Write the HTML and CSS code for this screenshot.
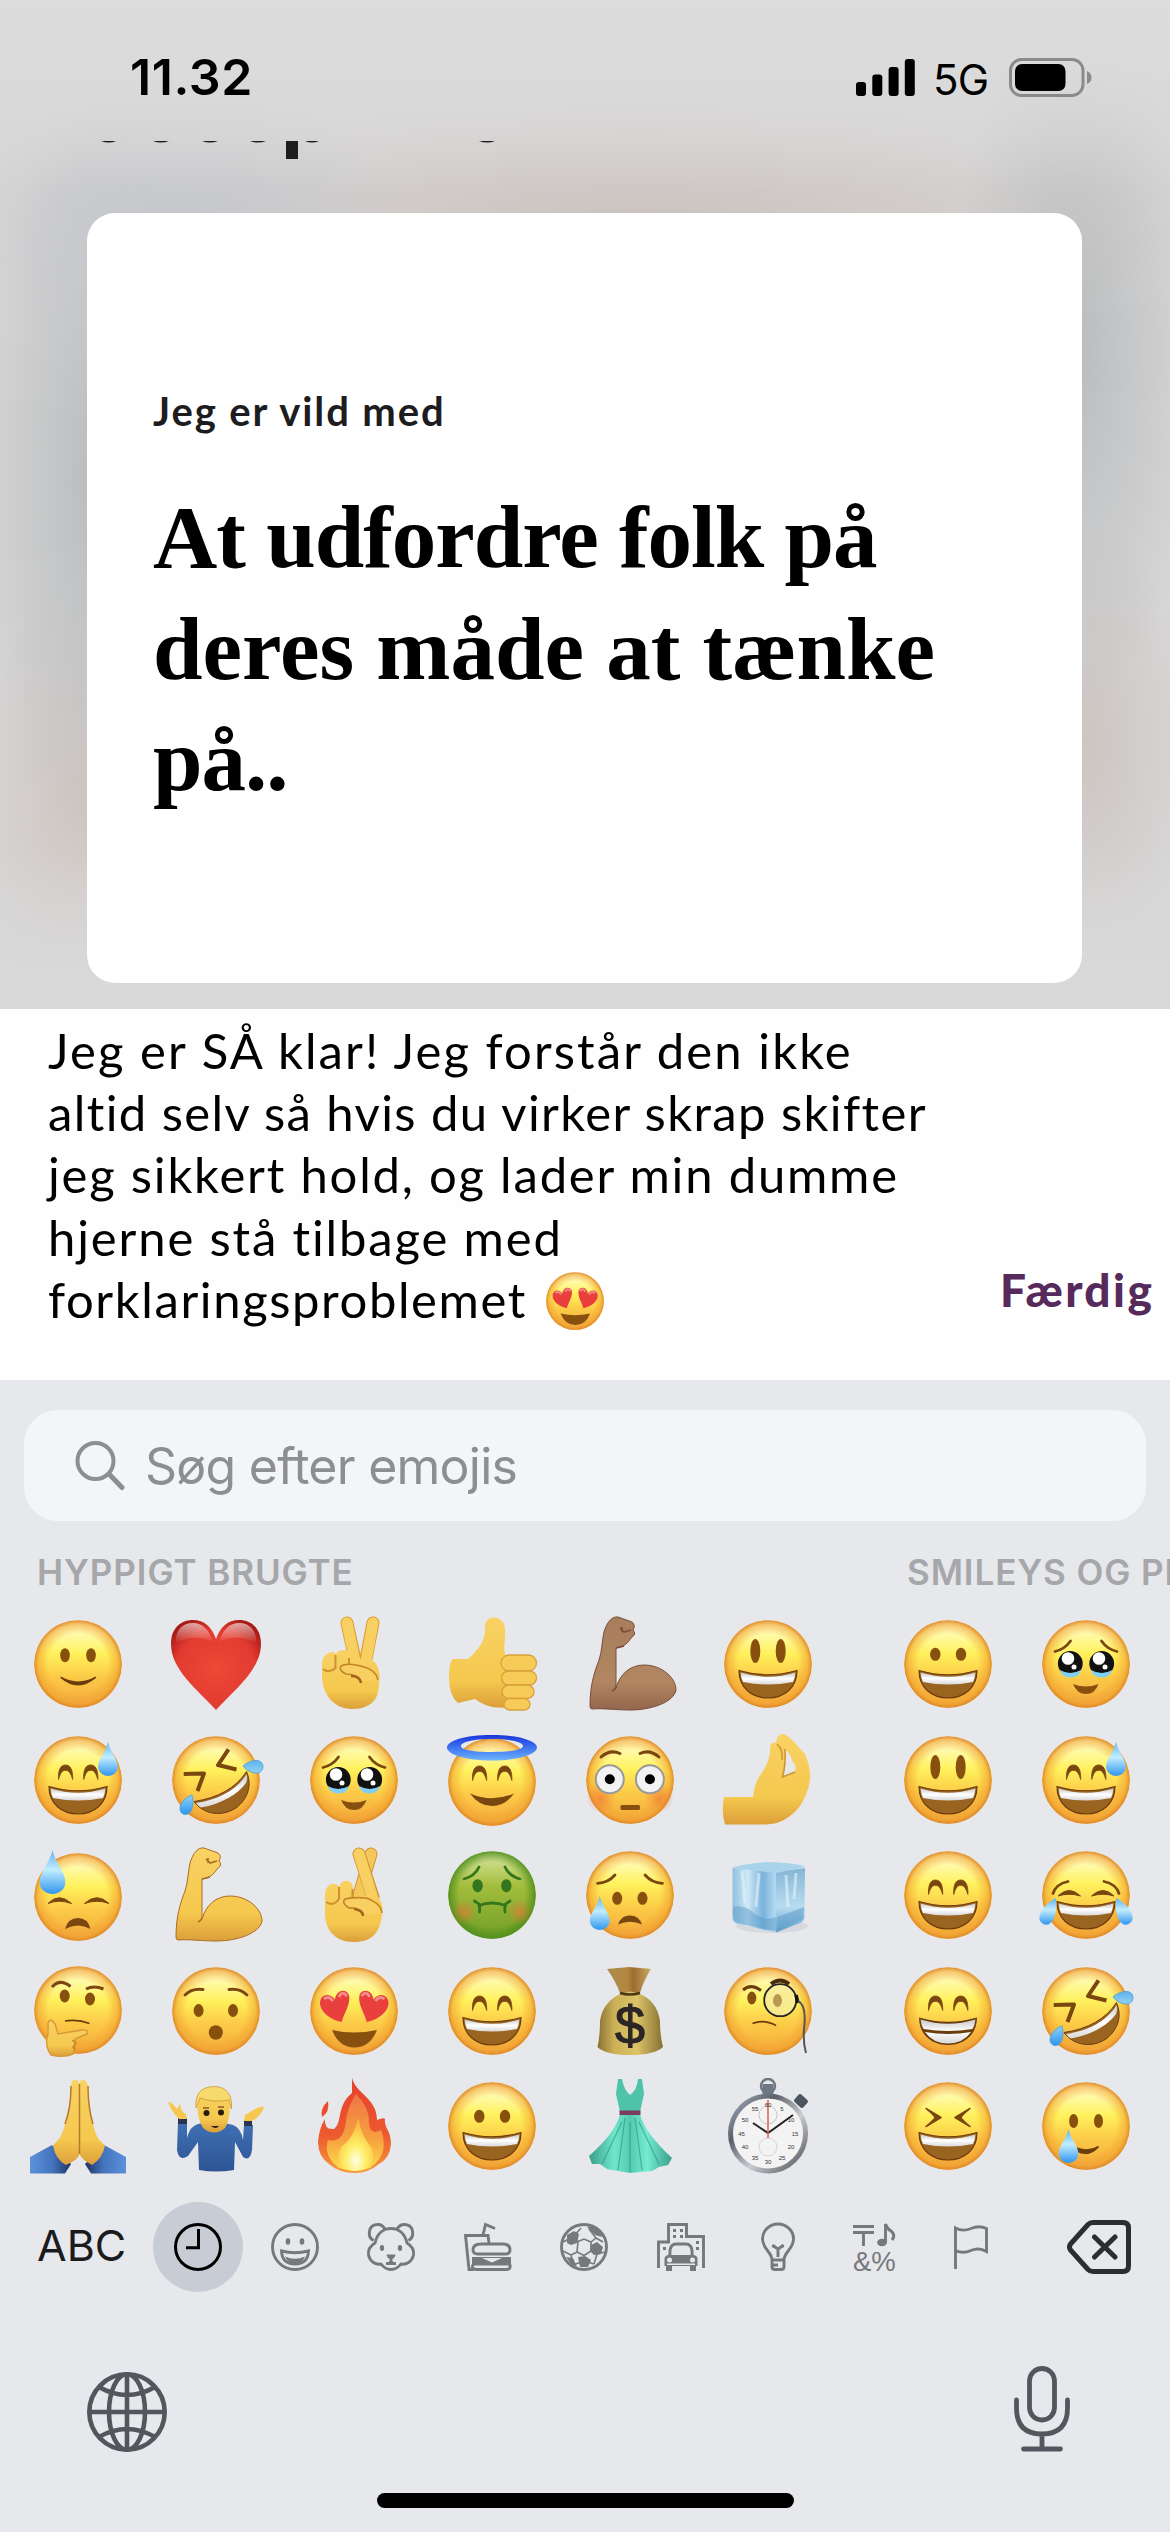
FILE: index.html
```html
<!DOCTYPE html>
<html lang="da">
<head>
<meta charset="utf-8">
<title>Jeg er vild med</title>
<link rel="stylesheet" href="styles.css">
</head>
<body>
<svg class="defs" width="0" height="0" aria-hidden="true">
  <defs>
    <linearGradient id="g-face" x1="0" y1="0" x2="0" y2="1"><stop offset="0" stop-color="#fff6c8"/><stop offset=".14" stop-color="#fffbb0"/><stop offset=".38" stop-color="#fff15c"/><stop offset=".65" stop-color="#fcca47"/><stop offset="1" stop-color="#f3a73c"/></linearGradient>
    <radialGradient id="g-rim"><stop offset=".68" stop-color="#f09a26" stop-opacity="0"/><stop offset=".9" stop-color="#f0a030" stop-opacity=".55"/><stop offset="1" stop-color="#dd8727" stop-opacity=".95"/></radialGradient>
    <linearGradient id="g-green" x1="0" y1="0" x2="0" y2="1"><stop offset="0" stop-color="#dbe7a4"/><stop offset=".4" stop-color="#a3bd3c"/><stop offset="1" stop-color="#6f9f26"/></linearGradient>
    <radialGradient id="g-greenrim"><stop offset=".75" stop-color="#4f8f1c" stop-opacity="0"/><stop offset="1" stop-color="#4f8f1c" stop-opacity=".9"/></radialGradient>
    <radialGradient id="g-blush"><stop offset="0" stop-color="#f07038" stop-opacity=".6"/><stop offset="1" stop-color="#f07038" stop-opacity="0"/></radialGradient>
    <linearGradient id="g-drop" x1="0" y1="0" x2="0" y2="1"><stop offset="0" stop-color="#5fb4ea"/><stop offset=".45" stop-color="#c3edff"/><stop offset="1" stop-color="#2f96ee"/></linearGradient>
    <linearGradient id="g-teeth" x1="0" y1="0" x2="0" y2="1"><stop offset="0" stop-color="#c9c9cc"/><stop offset=".5" stop-color="#fff"/><stop offset="1" stop-color="#d8d8da"/></linearGradient>
    <radialGradient id="g-heart" cx=".5" cy=".55" r=".62"><stop offset="0" stop-color="#ee4837"/><stop offset=".7" stop-color="#e23b30"/><stop offset="1" stop-color="#a81b18"/></radialGradient>
    <linearGradient id="g-shine" x1="0" y1="0" x2="0" y2="1"><stop offset="0" stop-color="#fff" stop-opacity=".6"/><stop offset="1" stop-color="#fff" stop-opacity="0"/></linearGradient>
    <linearGradient id="g-skin" x1="0" y1="0" x2="0" y2="1"><stop offset="0" stop-color="#f8d264"/><stop offset=".7" stop-color="#f5c84e"/><stop offset="1" stop-color="#dc9f3a"/></linearGradient>
    <linearGradient id="g-tan" x1="0" y1="0" x2="0" y2="1"><stop offset="0" stop-color="#a87d5c"/><stop offset=".7" stop-color="#b18661"/><stop offset="1" stop-color="#94664e"/></linearGradient>
    <linearGradient id="g-halo" x1="0" y1="0" x2="0" y2="1"><stop offset="0" stop-color="#1c36d8"/><stop offset=".5" stop-color="#3e74f2"/><stop offset="1" stop-color="#6db4fb"/></linearGradient>
    <linearGradient id="g-blue" x1="0" y1="0" x2="0" y2="1"><stop offset="0" stop-color="#3f70b4"/><stop offset="1" stop-color="#2d5594"/></linearGradient>
    <linearGradient id="g-sleeve" x1="0" y1="0" x2="1" y2="0"><stop offset="0" stop-color="#5b92dc"/><stop offset=".55" stop-color="#4474bd"/><stop offset="1" stop-color="#1f3260"/></linearGradient>
    <linearGradient id="g-sack" x1="0" y1="0" x2="1" y2="0"><stop offset="0" stop-color="#8a7033"/><stop offset=".25" stop-color="#cbb057"/><stop offset=".6" stop-color="#dcc468"/><stop offset="1" stop-color="#857032"/></linearGradient>
    <linearGradient id="g-sacktop" x1="0" y1="0" x2="1" y2="0"><stop offset="0" stop-color="#a98c49"/><stop offset=".45" stop-color="#b48740"/><stop offset=".6" stop-color="#9c6d30"/><stop offset="1" stop-color="#caa862"/></linearGradient>
    <linearGradient id="g-fire" x1="0" y1="0" x2="0" y2="1"><stop offset="0" stop-color="#e5402c"/><stop offset=".6" stop-color="#ec5a30"/><stop offset="1" stop-color="#f79a3c"/></linearGradient>
    <linearGradient id="g-fire2" x1="0" y1="0" x2="0" y2="1"><stop offset="0" stop-color="#ee7545"/><stop offset=".6" stop-color="#f7a23f"/><stop offset="1" stop-color="#fde04c"/></linearGradient>
    <radialGradient id="g-fire3" cx=".5" cy=".8" r=".7"><stop offset="0" stop-color="#fffde8"/><stop offset=".4" stop-color="#fff06a"/><stop offset="1" stop-color="#f9b93c"/></radialGradient>
    <linearGradient id="g-dress" x1="0" y1="0" x2="1" y2="0"><stop offset="0" stop-color="#3a9f8b"/><stop offset=".3" stop-color="#6fe5cb"/><stop offset=".5" stop-color="#54cbb1"/><stop offset=".7" stop-color="#74ebd2"/><stop offset="1" stop-color="#3a9f8b"/></linearGradient>
    <linearGradient id="g-steel" x1="0" y1="0" x2="1" y2="1"><stop offset="0" stop-color="#a8b4c8"/><stop offset=".3" stop-color="#5b6068"/><stop offset=".6" stop-color="#c9ccd2"/><stop offset="1" stop-color="#4a4a50"/></linearGradient>
    <linearGradient id="g-iceL" x1="0" y1="0" x2="1" y2="0"><stop offset="0" stop-color="#8fc0e0"/><stop offset=".35" stop-color="#cfe8f6"/><stop offset=".7" stop-color="#78b2dc"/><stop offset="1" stop-color="#b5daf0"/></linearGradient>
    <linearGradient id="g-iceR" x1="0" y1="0" x2="0" y2="1"><stop offset="0" stop-color="#84b5d5"/><stop offset=".6" stop-color="#b8dcf0"/><stop offset="1" stop-color="#5f9fcd"/></linearGradient>
  </defs>

  <symbol id="head" viewBox="0 0 96 96"><circle cx="48" cy="48" r="43.8" fill="url(#g-face)"/><circle cx="48" cy="48" r="43.8" fill="url(#g-rim)"/></symbol>
  <symbol id="drop" viewBox="0 0 20 34"><path d="M10 0C12 10 20 17 20 25A10 9 0 0 1 0 25C0 17 8 10 10 0Z" fill="url(#g-drop)"/></symbol>
  <symbol id="mouth" viewBox="0 0 96 96"><path d="M19 54.5Q48 63 77 54.5C77 72 64 82 48 82S19 72 19 54.5Z" fill="#99641f" stroke="#6b3c0c" stroke-width="1.2"/><path d="M20.6 56.5Q48 65 75.4 56.5Q75 62 73 66Q48 71 23 66Q21 62 20.6 56.5Z" fill="url(#g-teeth)"/></symbol>
  <symbol id="arches" viewBox="0 0 96 96"><path d="M28.5 47.5C28 37 31 33 35.5 33S43 37 42.7 47.5C40 39 38 38.5 35.5 38.5S31 39 28.5 47.5ZM53.7 47.5C53.2 37 56.2 33 60.7 33S68.2 37 67.9 47.5C65.2 39 63.2 38.5 60.7 38.5S56.2 39 53.7 47.5Z" fill="#7b4710" stroke="#7b4710" stroke-width=".8"/></symbol>

  <symbol id="slight" viewBox="0 0 96 96"><use href="#head"/><g fill="#87500f"><ellipse cx="35" cy="39.3" rx="4.8" ry="7"/><ellipse cx="61" cy="39.3" rx="4.8" ry="7"/></g><path d="M31 61.5Q48 76 65.5 61.5Q48 71 31 61.5Z" fill="#6b3c0c" stroke="#6b3c0c" stroke-width="1.5" stroke-linejoin="round"/></symbol>
  <symbol id="heart" viewBox="0 0 96 96"><path d="M48 94C30 74 3 54 3 28C3 12 13 4 25 4C36 4 44 11 48 23C52 11 60 4 71 4C83 4 93 12 93 28C93 54 66 74 48 94Z" fill="url(#g-heart)"/><path d="M25 7C14 7 7 15 8 27Q26 17 45 26C41 13 34 7 25 7ZM71 7C82 7 89 15 88 27Q70 17 51 26C55 13 62 7 71 7Z" fill="url(#g-shine)"/></symbol>
  <symbol id="victory" viewBox="0 0 96 96"><g stroke-linecap="round"><path d="M41 7L50 48M67 7L59 48" stroke="#dc9f36" stroke-width="13"/><path d="M41 7L50 50M67 7L59 50" stroke="#f8d062" stroke-width="11"/></g><path d="M16 48C16 36 28 34 30 38C33 32 44 32 44 42L50 50Q60 44 66 44C72 48 75 56 73 68C73 80 68 93 46 93C28 93 16 78 16 60Z" fill="url(#g-skin)"/><path d="M29.5 39V52Q23 58 17 53M43 42V49" stroke="#d08f30" stroke-width="2" fill="none"/><path d="M55 65Q51 58 40 58Q32 54 35 50Q42 46 58 51Q70 54 72 64" fill="#f8d062" stroke="#c58328" stroke-width="1.6"/><path d="M45 60Q54 60 55 67" stroke="#a5641a" stroke-width="2.5" fill="none"/></symbol>
  <symbol id="thumb" viewBox="0 0 96 96"><path d="M9 43H24C36 32 42 24 41 9C42-1 59-2 61 12C62 24 59 32 61 38L72 90C54 94 42 91 31 83L14 87Q5 80 5 62Q5 45 9 43Z" fill="url(#g-skin)"/><g fill="#f6cb58" stroke="#d9a03c" stroke-width="1.3"><rect x="57" y="39" width="35.5" height="16" rx="8"/><rect x="57.5" y="55" width="35" height="14" rx="7"/><rect x="58" y="69" width="32" height="13.5" rx="6.7"/><rect x="60" y="82.5" width="26" height="11.5" rx="5.7"/></g></symbol>
  <symbol id="arm" viewBox="0 0 96 96"><path d="M8 90C8 70 12 57 17 44C20 36 20 24 22 16C25 6 30 0 36 1L50 6Q54 9 51 14Q55 18 49 22C46 27 42 31 34 32V72C38 58 48 49 62 49C80 49 94 62 94 74C92 86 70 94 48 94C34 94 20 92 10 93Q8 93 8 90Z" stroke-width="1"/><path d="M34 32L42 30M38 12L42 16L49 14M40 11V16M34 71Q33 74 30 75" fill="none" stroke-width="1.6"/></symbol>
  <symbol id="smiley" viewBox="0 0 96 96"><use href="#head"/><g fill="#87500f"><ellipse cx="35.3" cy="35" rx="5" ry="12"/><ellipse cx="60.7" cy="35" rx="5" ry="12"/></g><use href="#mouth"/></symbol>
  <symbol id="grinning" viewBox="0 0 96 96"><use href="#head"/><g fill="#87500f"><ellipse cx="35.3" cy="38.3" rx="5.2" ry="6.5"/><ellipse cx="61" cy="38.3" rx="5.2" ry="6.5"/></g><use href="#mouth"/></symbol>
  <symbol id="grin" viewBox="0 0 96 96"><use href="#head"/><use href="#arches"/><use href="#mouth"/></symbol>
  <symbol id="sweat" viewBox="0 0 96 96"><use href="#grin"/><use href="#drop" x="68" y="10" width="20" height="34"/></symbol>
  <symbol id="beam" viewBox="0 0 96 96"><use href="#head"/><use href="#arches"/><path d="M19 54.5Q48 63 77 54.5C77 72 64 82 48 82S19 72 19 54.5Z" fill="#6b3c0c"/><path d="M20.6 56.5Q48 65 75.4 56.5Q75 62 72.5 66Q48 70 23.5 66Q21 62 20.6 56.5ZM25 69Q48 73 71 69Q63 80.5 48 80.5T25 69Z" fill="url(#g-teeth)"/></symbol>
  <symbol id="rofl" viewBox="0 0 96 96"><use href="#head"/><path d="M60.5 17.3L50 33L68.5 37.5M15.7 42L36 41.5L29.5 59" fill="none" stroke="#7b4710" stroke-width="4" stroke-linejoin="round"/><path d="M26 69.5C50 66 68 56 78.5 39.5C84 52 81 66 68 76C54 85 36 83 26 69.5Z" fill="#99641f" stroke="#6b3c0c"/><path d="M28 71C50 68 69 58 78.5 42Q80 46 78 51C70 62 54 72 33 75.5Q30 74 28 71Z" fill="url(#g-teeth)"/><path d="M75 34C81 28 95 25 95 35C94 45 80 41 75 34ZM24 63C27 74 23 85 15 82C8 78 14 66 24 63Z" fill="url(#g-drop)" stroke="#3f9fe0" stroke-width=".8"/></symbol>
  <symbol id="holding" viewBox="0 0 96 96"><use href="#head"/><path d="M17 35.5Q27 33 32.5 25M79 35.5Q69 33 63.5 25" fill="none" stroke="#7b4710" stroke-width="2.8" stroke-linecap="round"/><g fill="#111"><circle cx="32.3" cy="47.5" r="12.4"/><circle cx="63.7" cy="47.5" r="12.4"/></g><path d="M22 54Q32 60 43 54Q41 61.5 32.5 61.5T22 54ZM53 54Q64 60 74 54Q72 61.5 63.5 61.5T53 54Z" fill="#7fd0f7"/><g fill="#fff"><circle cx="30" cy="42.5" r="6.3"/><circle cx="61" cy="42.5" r="6.3"/><circle cx="36" cy="51" r="2.5"/><circle cx="67" cy="51" r="2.5"/></g><path d="M35 68Q48 73 60.5 68Q57 78 48 78T35 68Z" fill="#87500f"/></symbol>
  <symbol id="angel" viewBox="0 0 96 96"><use href="#head" y="2"/><use href="#arches" y="1"/><path d="M26 61.5Q48 71 70 61.5Q61 74 48 74T26 61.5Z" fill="#7b4710"/><path fill-rule="evenodd" d="M48 3C76 3 93 9 93 15.5S76 28.5 48 28.5S3 22 3 15.5S20 3 48 3ZM48 7C30 7 17 10 17 14S30 20 48 20S79 18 79 14S66 7 48 7Z" fill="url(#g-halo)"/></symbol>
  <symbol id="flushed" viewBox="0 0 96 96"><use href="#head"/><circle cx="19" cy="66" r="15" fill="url(#g-blush)"/><circle cx="77" cy="66" r="15" fill="url(#g-blush)"/><path d="M19 25Q28 17 38 21.5M77 25Q68 17 58 21.5" fill="none" stroke="#7b4710" stroke-width="3" stroke-linecap="round"/><g fill="#f2f2f2" stroke="#999" stroke-width="2"><circle cx="27.8" cy="47.3" r="14"/><circle cx="67.9" cy="47.3" r="14"/></g><circle cx="27.8" cy="47.3" r="5"/><circle cx="67.9" cy="47.3" r="5"/><rect x="38.5" y="73" width="19.5" height="5" rx="1.5" fill="#87500f"/></symbol>
  <symbol id="pinch" viewBox="0 0 96 96"><path fill-rule="evenodd" d="M4 65H33Q34 52 41 42Q51 28 50 15Q51 9 56 11Q57 1 64 2Q68 3 85 22Q91 36 90 48Q88 62 80 74Q66 92 46 92.5H5Q1 79 4 65ZM65 17Q66 32 62.5 45L75 40Q77 32 72.5 30Q72 24 65 17Z" fill="url(#g-skin)"/><path d="M65 17Q66 32 62.5 45L75 40M57 12Q63 17 62 28" fill="none" stroke="#d19433" stroke-width="1.6"/></symbol>
  <symbol id="downcast" viewBox="0 0 96 96"><use href="#head" y="2"/><path d="M18 56.5Q29 45 41.5 56.5Q29 52 18 56.5ZM54.5 56.5Q67 45 79 56.5Q67 52 54.5 56.5Z" fill="#7b4710" stroke="#7b4710"/><path d="M35 82Q38 71 48 71T60.5 82Q48 75 35 82Z" fill="#7b4710"/><use href="#drop" x="9.5" y="3" width="26" height="44"/></symbol>
  <symbol id="crossed" viewBox="0 0 96 96"><g stroke-linecap="round"><path d="M65 7L53 48" stroke="#d39636" stroke-width="13"/><path d="M65 7L53 48" stroke="#f3c758" stroke-width="11"/><path d="M53 7L67 50" stroke="#d39636" stroke-width="13"/><path d="M53 7L67 52" stroke="#f8d062" stroke-width="11"/></g><path d="M19 50C18 36 30 34 33 40C36 31 47 32 47 42V50Q60 46 72 51C78 56 77 64 75 74C72 86 66 95 48 95C28 95 19 82 19 66Z" fill="url(#g-skin)"/><path d="M33 40V52Q27 60 20 55M46.5 42V50" stroke="#d08f30" stroke-width="2" fill="none"/><path d="M57 68Q54 60 43 61Q35 56 39 52Q48 50 60 51Q75 56 76 66" fill="#f8d062" stroke="#c58328" stroke-width="1.6"/><path d="M48 62Q57 63 57 69" stroke="#a5641a" stroke-width="2.5" fill="none"/></symbol>
  <symbol id="sick" viewBox="0 0 96 96"><circle cx="48" cy="48" r="43.8" fill="url(#g-green)"/><circle cx="48" cy="48" r="43.8" fill="url(#g-greenrim)"/><circle cx="20" cy="65" r="13" fill="url(#g-blush)"/><circle cx="76" cy="65" r="13" fill="url(#g-blush)"/><g fill="#33761b"><ellipse cx="33.6" cy="38.7" rx="5.2" ry="6.5"/><ellipse cx="62.3" cy="38.7" rx="5.2" ry="6.5"/></g><path d="M20 32Q31 29 35 20M76 32Q65 29 61 20M30.5 54L35 57Q36 61 35.5 65M66 54L61.5 57Q60.5 61 61 65M35 58.5Q48 53.5 61.5 58.5" fill="none" stroke="#33761b" stroke-width="2.8" stroke-linecap="round"/></symbol>
  <symbol id="relieved" viewBox="0 0 96 96"><use href="#head"/><path d="M15.5 36.3Q26 36 33 28M80.5 36.3Q70 36 63 28" fill="none" stroke="#7b4710" stroke-width="2.8" stroke-linecap="round"/><g fill="#87500f"><ellipse cx="35.2" cy="51.3" rx="5" ry="6.5"/><ellipse cx="60.5" cy="51.3" rx="5" ry="6.5"/></g><path d="M36 77.5Q39 68.5 48 68.5T60 77.5Q48 72 36 77.5Z" fill="#7b4710"/><use href="#drop" x="7.5" y="49" width="20.5" height="34"/></symbol>
  <symbol id="ice" viewBox="0 0 96 96"><ellipse cx="52" cy="79" rx="36" ry="7" fill="#b9bec6" opacity=".35"/><path d="M12.5 21L56 25V85.5L18 77Q12 75 12.5 70Z" fill="url(#g-iceL)"/><path d="M56 25L85 21L84.5 70Q84 74 80 76L56 85.5Z" fill="url(#g-iceR)"/><path d="M12.5 21Q15 18 46 15Q80 16 85 20L56 26Z" fill="#a9d3ea"/><path d="M13 60Q24 57 34 66T56 70V84L17 76Q12 74 13 60ZM57 70Q72 65 84 60L83 72L58 84Z" fill="#5c9bc8" opacity=".5"/><path d="M22 24L25 56M39 26L36 60M66 28L68 60M76 26L74 52" stroke="#e4f4fc" stroke-width="3" opacity=".6"/></symbol>
  <symbol id="think" viewBox="0 0 96 96"><use href="#head" y="-1"/><path d="M22 24Q30 15 40.5 23.5M56 26Q64 22 73.5 26" fill="none" stroke="#7b4710" stroke-width="3"/><g fill="#87500f"><ellipse cx="34.7" cy="33" rx="5" ry="6.5"/><ellipse cx="60" cy="36" rx="5" ry="6.5"/></g><path d="M35 58Q48 56 59.5 60.5" fill="none" stroke="#6b3c0c" stroke-width="1.6"/><path d="M18 60Q20 54 25 61L28 71L52 67Q59 66 57 71L45 76Q46 84 43 91Q34 95 21 92Q14 82 18 71Z" fill="url(#g-skin)" stroke="#d69937" stroke-width="1.4"/><path d="M42 77L46 80L43 84L45 87" stroke="#c2822a" stroke-width="1.5" fill="none"/></symbol>
  <symbol id="hushed" viewBox="0 0 96 96"><use href="#head"/><path d="M17 32Q24 25 35 26.5M79 32Q72 25 61 26.5" fill="none" stroke="#7b4710" stroke-width="2.8" stroke-linecap="round"/><g fill="#87500f"><ellipse cx="30.6" cy="47.5" rx="5" ry="6.5"/><ellipse cx="65" cy="47.5" rx="5" ry="6.5"/><ellipse cx="47.8" cy="69.5" rx="7" ry="7.3"/></g></symbol>
  <symbol id="eyeheart" viewBox="0 0 96 96"><path d="M35.7 59C25 57 14 49 14 40C14 31 24 29 29 36.5C30 27 40 25 43 32C45 41 38 50 35.7 59Z" fill="#e93f3d"/><path d="M18 36Q23 32 27 38M33 34Q36 27 41 33" stroke="#fff" stroke-width="3" opacity=".4" fill="none"/></symbol>
  <symbol id="love" viewBox="0 0 96 96"><use href="#head"/><use href="#eyeheart"/><use href="#eyeheart" transform="matrix(-1 0 0 1 96.5 0)"/><path d="M26 67Q48 72 71 67Q64 84.5 48.5 84.5T26 67Z" fill="#87500f"/></symbol>
  <symbol id="money" viewBox="0 0 96 96"><path d="M25 6L47 4L69 6Q62 17 58 30H38Q33 17 25 6Z" fill="url(#g-sacktop)"/><path d="M38 31Q48 26 58 31C69 36 76 44 78 58Q78 73 81 84Q72 92 48 92T15.5 84Q18 73 18 58C20 44 28 36 38 31Z" fill="url(#g-sack)"/><path d="M38 30Q48 33 58 30" stroke="#4d3813" stroke-width="2.5" fill="none"/></symbol>
  <symbol id="monocle" viewBox="0 0 96 96"><use href="#head"/><path d="M23 27Q31 20 41 27.5" fill="none" stroke="#6b3c0c" stroke-width="3"/><path d="M51 21Q60 14 69 21" fill="none" stroke="#4b2b10" stroke-width="4"/><ellipse cx="31.8" cy="35" rx="4.5" ry="6.5" fill="#87500f"/><circle cx="60.2" cy="37.2" r="16" fill="#f7eb9d" fill-opacity=".8" stroke="#222" stroke-width="1.8"/><ellipse cx="57.5" cy="37.5" rx="4.5" ry="6.5" fill="#b89a52"/><path d="M32.5 60.5Q44 56 56 62.5" fill="none" stroke="#6b3c0c" stroke-width="1.8"/><path d="M76 32L78 40" stroke="#111" stroke-width="3.5"/><path d="M78 38Q87 42 84 66Q83 80 86 90" fill="none" stroke="#555" stroke-width="2"/></symbol>
  <symbol id="pray" viewBox="0 0 96 96"><path d="M0 79L22 67L41 86L35 95.5H0Z" fill="url(#g-sleeve)"/><path d="M0 79L22 67L41 86L35 95.5H0Z" transform="matrix(-1 0 0 1 96 0)" fill="url(#g-sleeve)"/><path d="M49.5 6Q48 1 44 2Q41 3 41 8Q41 30 35 46C32 58 29 62 23 67Q25 81 36 87Q48 82 49.5 76Q52 82 62 87Q73 80 75 67C68 62 66 58 63 46Q58 30 58 8Q57 3 54 2Q50 1 49.5 6Z" fill="url(#g-skin)"/><path d="M49.5 6V76M41 8Q41 30 35 46M58 8Q58 30 63 46" stroke="#b8792a" stroke-width="1.5" fill="none"/></symbol>
  <symbol id="shrug" viewBox="0 0 96 96"><path d="M30 46Q22 48 19 60V44H10L9 72Q11 84 20 78L30 64L31 92Q48 95 66 92L67 64L75 79Q82 84 84 72L85 47H76L75 62Q73 50 65 47Q60 45 47 45T30 46Z" fill="url(#g-blue)"/><path d="M10 40H19V46H10ZM76 42H84V48H76Z" fill="#2a3350"/><path d="M11 41Q3 33 0 24Q4 24 9 31L12 26Q13 34 18 36L19 41ZM76 43L77 37L84 33Q90 28 96 29Q94 37 84 43Z" fill="#f5c650"/><path d="M29 24Q30 9 46 9T62 26Q62 42 57 50Q46 59 35 50Q29 40 29 24Z" fill="url(#g-skin)"/><path d="M28 30Q26 9 46 8.5Q65 9 63.500 31L61 22Q46 25 32 20Z" fill="#f7da6d" stroke="#c99b37" stroke-width=".8"/><circle cx="38.5" cy="35" r="3" fill="#2a1a0c"/><circle cx="53" cy="34.5" r="3" fill="#2a1a0c"/><path d="M35 30H41M50 29H56" stroke="#8d5a20" stroke-width="1.5"/><path d="M43 48H51Q48 52 43 48Z" fill="#301a10"/></symbol>
  <symbol id="fire" viewBox="0 0 96 96"><path d="M46 0C50 16 71 20 71 42Q78 39 79 41C78 50 85 52 85 66Q84 80 73 86Q62 95 49 95Q33 95 23 86Q12 78 12 64Q13 50 19 41Q18 52 28 51C37 44 30 28 46 15ZM22 23Q24 34 16 39Q14 30 22 23Z" fill="url(#g-fire)"/><path d="M50 16Q64 30 63 45Q64 58 75 52Q84 76 64 90Q49 95 33 90Q17 78 22 62Q38 66 40 42Q42 28 50 16Z" fill="url(#g-fire2)"/><path d="M52 40Q56 58 64 68Q72 80 60 91Q49 95 37 91Q28 80 36 68Q48 60 52 40Z" fill="url(#g-fire3)"/></symbol>
  <symbol id="dress" viewBox="0 0 96 96"><path d="M36 1H40Q42 12 48 17Q55 12 56 1H60L62 16L58 34H38L34 16Z" fill="#4fc3aa"/><path d="M38 36H58Q62 54 90 80L86 87L77 89L70 93L58 94L48 95L36 93L25 91L18 86L10 86L7 78Q34 54 38 36Z" fill="url(#g-dress)"/><path d="M43 40L36 92M53 40L60 92M40 44L20 86M57 44L77 86M48 44V94" stroke="#329582" stroke-width="1.3" opacity=".6"/><path d="M37.5 32.5H58.5V37H37.5Z" fill="#7b3c62"/></symbol>
  <symbol id="watch" viewBox="0 0 96 96"><circle cx="48" cy="8" r="7" fill="none" stroke="#70767e" stroke-width="2.5"/><path d="M42.5 6H53.5V16H42.5Z" fill="#6c7684"/><rect x="75" y="18" width="12" height="10" rx="2" transform="rotate(42 81 23)" fill="#4c5460"/><circle cx="48" cy="55.5" r="37.5" fill="#f3f3f4" stroke="url(#g-steel)" stroke-width="5"/><circle cx="48" cy="37" r="9" fill="none" stroke="#bbb" stroke-width=".8"/><circle cx="48" cy="69" r="9" fill="none" stroke="#ccc" stroke-width=".8"/><path d="M33 45L48 55L73 37" fill="none" stroke="#222" stroke-width="2"/><path d="M48 22V60" stroke="#df6a4c" stroke-width="1.6"/></symbol>
  <symbol id="joy" viewBox="0 0 96 96"><use href="#head"/><path d="M15 46.5Q18 37 30 34.5M81 46.5Q78 37 66 34.5" fill="none" stroke="#7b4710" stroke-width="2.8" stroke-linecap="round"/><path d="M20 49Q31 38 42.5 49Q31 45.5 20 49ZM53.5 49Q65 38 76 49Q65 45.5 53.5 49Z" fill="#7b4710" stroke="#7b4710"/><use href="#mouth"/><path d="M18 51C8 56-1 66 2 74C8 82 20 78 18 51Z" fill="url(#g-drop)"/><path d="M78 51C88 56 97 66 94 74C88 82 76 78 78 51Z" fill="url(#g-drop)"/></symbol>
  <symbol id="squint" viewBox="0 0 96 96"><use href="#head"/><path d="M26 30.5L41 39.5L26 48.5Q34 42 35 39.5Q34 37 26 30.5ZM70 30.5L55 39.5L70 48.5Q62 42 61 39.5Q62 37 70 30.5Z" fill="#7b4710" stroke="#7b4710" stroke-width="1.5" stroke-linejoin="round"/><use href="#mouth"/></symbol>
  <symbol id="tearful" viewBox="0 0 96 96"><use href="#head"/><g fill="#87500f"><ellipse cx="35.6" cy="43" rx="4.5" ry="7"/><ellipse cx="60.5" cy="43" rx="4.5" ry="7"/></g><path d="M31 67Q48 83 60.5 68.5Q48 76 31 67Z" fill="#6b3c0c" stroke="#6b3c0c" stroke-width="1.5"/><use href="#drop" x="20.5" y="51" width="20" height="34"/></symbol>
</svg>

<main class="screen">
  <section class="backdrop">
    <header class="status">
      <span class="time">11.32</span>
      <svg class="signal" viewBox="0 0 59 37"><rect y="23" width="10" height="14" rx="3"/><rect x="16.3" y="15.5" width="10" height="21.5" rx="3"/><rect x="32.6" y="8" width="10" height="29" rx="3"/><rect x="48.8" width="10" height="37" rx="3"/></svg>
      <span class="network">5G</span>
      <svg class="battery" viewBox="0 0 83 39"><rect x="1.5" y="1.5" width="72.5" height="36" rx="11" fill="none" stroke="#8b8989" stroke-width="3"/><rect x="6" y="6" width="50.5" height="27" rx="7"/><path d="M78 13Q82.5 15 82.5 19.5T78 26Z" fill="#8b8989"/></svg>
    </header>
    <svg class="scrolled-title" viewBox="0 0 400 20"><path d="M1 0H16Q9 3 1 0ZM53 0H69Q61 3 53 0ZM102 0H118Q110 3 102 0ZM150 0H166Q158 3 150 0ZM186 0H198V18H186ZM205 0H219Q212 3 205 0ZM379 0H395Q387 3 379 0Z" fill="#1d1d1e"/></svg>
    <article class="card">
      <p class="prompt">Jeg er vild med</p>
      <h1 class="answer">At udfordre folk på<br><span class="answer-mid">deres måde at tænke</span><br>på..</h1>
    </article>
  </section>

  <section class="composer">
    <p class="message"><span class="l1">Jeg er SÅ klar! Jeg forstår den ikke</span><br><span class="l2">altid selv så hvis du virker skrap skifter</span><br><span class="l3">jeg sikkert hold, og lader min dumme</span><br><span class="l4">hjerne stå tilbage med</span><br><span class="l5">forklaringsproblemet</span><svg class="inline-emoji" viewBox="4 4 88 88"><use href="#love" width="96" height="96"/></svg></p>
    <span class="done">Færdig</span>
  </section>

  <section class="keyboard">
    <div class="search">
      <svg class="lens" viewBox="0 0 50 50"><circle cx="20.5" cy="20" r="18" fill="none" stroke="#8d8e93" stroke-width="4"/><path d="M34 33L47 46.5" stroke="#8d8e93" stroke-width="5" stroke-linecap="round"/></svg>
      <span>Søg efter emojis</span>
    </div>
    <div class="sections">
      <div class="group">
        <h2 class="label">HYPPIGT BRUGTE</h2>
        <div class="grid six">
          <svg><use href="#slight"/></svg><svg><use href="#heart"/></svg><svg><use href="#victory"/></svg><svg><use href="#thumb"/></svg><svg class="tan"><use href="#arm"/></svg><svg><use href="#smiley"/></svg>
          <svg><use href="#sweat"/></svg><svg><use href="#rofl"/></svg><svg><use href="#holding"/></svg><svg><use href="#angel"/></svg><svg><use href="#flushed"/></svg><svg><use href="#pinch"/></svg>
          <svg><use href="#downcast"/></svg><svg class="yellow"><use href="#arm"/></svg><svg><use href="#crossed"/></svg><svg><use href="#sick"/></svg><svg><use href="#relieved"/></svg><svg><use href="#ice"/></svg>
          <svg><use href="#think"/></svg><svg><use href="#hushed"/></svg><svg><use href="#love"/></svg><svg><use href="#grin"/></svg><svg><use href="#money"/><text x="48" y="81" text-anchor="middle" class="dollar">$</text></svg><svg><use href="#monocle"/></svg>
          <svg><use href="#pray"/></svg><svg><use href="#shrug"/></svg><svg><use href="#fire"/></svg><svg><use href="#grinning"/></svg><svg><use href="#dress"/></svg><svg><use href="#watch"/><g class="dial" text-anchor="middle"><text x="48" y="29">60</text><text x="62" y="33">5</text><text x="71" y="44">10</text><text x="75" y="57.5">15</text><text x="71" y="71">20</text><text x="62" y="82">25</text><text x="48" y="86">30</text><text x="35" y="82">35</text><text x="25" y="71">40</text><text x="21.5" y="57.5">45</text><text x="25" y="44">50</text><text x="35" y="33">55</text></g></svg>
        </div>
      </div>
      <div class="group">
        <h2 class="label">SMILEYS OG PERSONER</h2>
        <div class="grid two">
          <svg><use href="#grinning"/></svg><svg><use href="#holding"/></svg>
          <svg><use href="#smiley"/></svg><svg><use href="#sweat"/></svg>
          <svg><use href="#grin"/></svg><svg><use href="#joy"/></svg>
          <svg><use href="#beam"/></svg><svg><use href="#rofl"/></svg>
          <svg><use href="#squint"/></svg><svg><use href="#tearful"/></svg>
        </div>
      </div>
    </div>
    <nav class="categories">
      <span class="abc">ABC</span>
      <span class="tab active"><svg viewBox="0 0 48 48"><circle cx="24" cy="24" r="22.5"/><path d="M24.5 6V24.7H12"/></svg></span>
      <span class="tab"><svg viewBox="0 0 48 48"><circle cx="24" cy="24" r="22.5"/><g class="solid"><ellipse cx="17" cy="18.5" rx="2.3" ry="3.2"/><ellipse cx="31" cy="18.5" rx="2.3" ry="3.2"/></g><path d="M10.5 28Q24 31.5 37.5 28Q37 41 24 41T10.5 28Z"/><path class="solid" d="M14 33.5Q24 38 34 33.5Q31 41 24 41T14 33.5Z"/></svg></span>
      <span class="tab"><svg viewBox="0 0 48 48"><path d="M24 5.5C16 5.5 10 11 8 20C3 23 1 28 1.5 32C3 39 9 42 14 41C17 45 20 46.5 24 46.5S31 45 34 41C39 42 45 39 46.5 32C47 28 45 23 40 20C38 11 32 5.5 24 5.5Z"/><path d="M6.5 17.5C0 14 1 2 10 1.5Q15 1 18 6M41.5 17.5C48 14 47 2 38 1.5Q33 1 30 6M19 40.5H23L24 37.5L25 40.5H29"/><g class="solid"><ellipse cx="15" cy="25" rx="2.2" ry="3"/><ellipse cx="33" cy="25" rx="2.2" ry="3"/><path d="M19.5 31.5H28.5Q28 35 24 37Q20 35 19.5 31.5Z"/></g></svg></span>
      <span class="tab"><svg viewBox="0 0 48 48"><path d="M20 12.5H1.5L5 46.5H10M19 12L21.5 1.5L31 5.5M25 20L24 12.5H18"/><path d="M9 27Q9 21 17 21H39Q46 21 46 27Q46 31 41 31H14Q9 31 9 27ZM12 41Q8 41 8.5 44Q9 46.5 13 46.5H42Q46 46.5 46 44Q47 41 43 41Z"/><path class="solid" d="M8 34H47V41H8Z"/><path class="paper" d="M18 35H38L28 39.5Z"/></svg></span>
      <span class="tab"><svg viewBox="0 0 48 48"><circle cx="24" cy="24" r="22.5"/><path d="M18 18.5L24 16L31 19V28L24 32.5L17 29ZM17 29L11 32M31 28L37 31M24 32.5V38M18 18.5L13 14M31 19L36 15M11 32L3 28M11 32L13 42M37 31L34 41M37 31L45 29M24 38L34 41M24 38L13 42M13 14L3 19M13 14L21 5M36 15L29 6M36 15L43 19" stroke-width="1.6"/><path class="solid" d="M7 12L14 8L19 11L17 20L11 22L7 20ZM27 4L33 3L41 9L42 14L35 12ZM31 22L37 19L43 24L41 31L34 32L30 28ZM18 34L25 33L31 37L28 44L20 44ZM6 34L13 35L17 44L11 41Z"/></svg></span>
      <span class="tab"><svg viewBox="0 0 48 48"><path d="M1.5 45V19H11.5V1.5H29.5V13.5H46.5V45M13 33Q12 21 19 21H29Q36 21 35 33M8.5 41.5H39.5"/><path class="solid" d="M11 32H37Q41 33 40.5 37V43H39V48H33V43H15V48H9V43H7.5V37Q7 33 11 32ZM16 6H19V9H16ZM23 6H26V9H23ZM16 12H19V15H16ZM23 12H26V15H23ZM39 18H42V21H39ZM39 24H42V27H39ZM6 24H9V27H6Z"/><circle class="paper" cx="12.5" cy="37" r="2.5"/><circle class="paper" cx="35.5" cy="37" r="2.5"/><path class="paper" d="M10 40.5H38V42H10Z"/></svg></span>
      <span class="tab"><svg viewBox="0 0 48 48"><path d="M18 37C18 29 8.5 26 8.5 16A15.5 15 0 0 1 39.5 16C39.5 26 30 29 30 37ZM18 37V44Q18 46.5 21 46.5H27Q30 46.5 30 44V37M24 34V26L19.5 23M24 26L28.5 23M19 42H24"/><circle class="solid" cx="19.5" cy="23" r="1.8"/><circle class="solid" cx="28.5" cy="23" r="1.8"/></svg></span>
      <span class="tab"><svg viewBox="0 0 48 48"><path d="M3 3.5H24M3 9.5H24M13.5 10V23M35.5 20V1Q37 6 41 8Q46 12 42 17"/><ellipse class="solid" cx="32" cy="19.5" rx="4.8" ry="3.8"/><text x="3" y="47.5" class="amp">&amp;%</text></svg></span>
      <span class="tab"><svg viewBox="0 0 48 48"><path d="M8.5 46V5Q16 9 24 5.5Q32 2 39.5 5.5V28.5Q32 24 24 27.5Q16 31 8.5 27.5"/></svg></span>
      <svg class="delete" viewBox="0 0 64 54"><path d="M26 2.5H56Q61.5 2.5 61.5 8V46Q61.5 51.5 56 51.5H26Q23 51.5 21 49.5L3.5 30Q1.5 27 3.5 24L21 4.5Q23 2.5 26 2.5ZM27.5 17L48 37M48 17L27.5 37"/></svg>
    </nav>
    <footer class="dock">
      <svg class="globe" viewBox="0 0 80 80"><circle cx="40" cy="40" r="37.7"/><ellipse cx="40" cy="40" rx="18" ry="37.7"/><path d="M40 2V78M2 40H78M12 15Q40 31 68 15M12 65Q40 49 68 65"/></svg>
      <svg class="mic" viewBox="0 0 56 86"><rect x="15.5" y="2.5" width="25" height="51.5" rx="12.5"/><path d="M2.5 34V42Q2.5 68 28 68T53.5 42V34M28 68V82M9.5 83H46.5"/></svg>
    </footer>
    <div class="home"></div>
  </section>
</main>
</body>
</html>
```
FILE: styles.css
```css
* { box-sizing: border-box; }
body { margin: 0; background: #e7e8ec; }
p, h1, h2 { margin: 0; }
.defs { position: absolute; }
.screen { width: 1170px; height: 2532px; overflow: hidden; display: flex; flex-direction: column; font-family: Inter, "Liberation Sans", sans-serif; }

.backdrop {
  height: 1009px;
  flex: none;
  background:
    linear-gradient(to bottom, #dcdcdc 0, rgba(220,219,219,.9) 70px, rgba(220,219,219,0) 190px),
    linear-gradient(to top, #d9d9d9 0, #d9d9d9 30px, rgba(217,217,217,0) 160px),
    radial-gradient(ellipse 230px 140px at 180px 225px, #c4c6cb, rgba(196,198,203,0)),
    radial-gradient(ellipse 520px 150px at 640px 240px, #cac0bc, rgba(202,192,188,0)),
    radial-gradient(ellipse 125px 380px at 100px 480px, #b8bbbd, rgba(184,187,189,0)),
    radial-gradient(ellipse 125px 370px at 1075px 350px, #b9bcbe, rgba(185,188,190,0)),
    radial-gradient(ellipse 115px 220px at 85px 800px, #cfc6c1, rgba(207,198,193,0)),
    radial-gradient(ellipse 105px 220px at 1085px 740px, #ccc5c1, rgba(204,197,193,0)),
    #d7d6d6;
}
.status { height: 141px; padding: 46px 78px 0 130px; display: flex; align-items: flex-start; }
.time { width: 726px; font-size: 50px; line-height: 62px; font-weight: 600; letter-spacing: .6px; }
.signal { width: 59px; height: 37px; margin-top: 13px; }
.network { width: 94px; padding-left: 18px; font-size: 42px; line-height: 51px; margin-top: 8px; letter-spacing: -.8px; }
.battery { width: 83px; height: 39px; margin-top: 12px; }
.scrolled-title { display: block; width: 400px; height: 20px; margin-left: 100px; }
.card { width: 995px; height: 770px; margin: 52px 0 0 87px; padding: 173px 66px 0; border-radius: 28px; background: #fff; }
.prompt { font: 700 40px/50px Lato, sans-serif; letter-spacing: 1.9px; color: #1d1d1f; }
.answer { margin-top: 46px; font: 700 89px/111.7px "Liberation Serif", serif; letter-spacing: -1px; white-space: nowrap; }
.answer-mid { letter-spacing: 0; }

.composer { height: 371px; flex: none; padding: 10px 0 0 48px; display: flex; background: #fefefe; }
.message { width: 952px; font: 400 49px/62.2px Lato, sans-serif; white-space: nowrap; }
.l1 { letter-spacing: 2.1px; }
.l2 { letter-spacing: 1.4px; }
.l3 { letter-spacing: 1.8px; }
.l4 { letter-spacing: 1.85px; }
.l5 { letter-spacing: 1.6px; }
.inline-emoji { width: 58px; height: 58px; margin: -14px 0 -12px 19px; vertical-align: 0; }
.done { align-self: flex-start; margin-top: 241px; font: 900 46px/60px Lato, sans-serif; letter-spacing: 2.4px; color: #562a5b; }

.keyboard { flex: 1; background: #e7e8ec; display: flex; flex-direction: column; padding-top: 30px; }
.search { height: 111px; margin: 0 24px; padding-left: 51px; border-radius: 34px; background: #f4f5f9; display: flex; align-items: center; gap: 20px; font-size: 50px; letter-spacing: -.75px; color: #8d8e93; }
.lens { width: 50px; height: 50px; }
.sections { display: flex; gap: 84px; padding-left: 30px; margin-top: 30px; }
.group { flex: none; }
.label { height: 65px; padding-left: 7px; font-size: 35px; line-height: 42px; font-weight: 600; letter-spacing: .9px; color: #a6a7aa; white-space: nowrap; }
.group:last-child { width: 240px; }
.grid { display: grid; grid-auto-rows: 96px; gap: 19.5px 42px; }
.grid svg { width: 96px; height: 96px; }
.six { grid-template-columns: repeat(6, 96px); }
.two { grid-template-columns: repeat(2, 96px); }
.tan { fill: url(#g-tan); stroke: #7a4d3a; }
.yellow { fill: url(#g-skin); stroke: #a96d23; }
.dollar { font: 400 54px "Liberation Sans", sans-serif; fill: #2b2528; stroke: #2b2528; stroke-width: 1.2px; }
.dial { font: 400 6px "Liberation Sans", sans-serif; fill: #333; }

.categories { height: 90px; margin-top: 28px; padding-left: 37px; display: flex; align-items: center; }
.abc { width: 116px; font-size: 43px; line-height: 52px; margin-top: -5px; color: #1b1b1d; }
.tab { width: 90px; height: 90px; margin-right: 6.6px; border-radius: 50%; display: flex; align-items: center; justify-content: center; }
.tab svg { width: 48px; height: 48px; overflow: visible; fill: none; stroke: #77787b; stroke-width: 2.9; }
.tab .solid { fill: #77787b; stroke: none; }
.tab .paper { fill: #e7e8ec; stroke: none; }
.tab.active { background: #c8ccd4; }
.tab.active svg { stroke: #000; stroke-width: 3; }
.tab .amp { font: 400 27.5px "Liberation Sans", sans-serif; fill: #77787b; stroke: none; }
.delete { width: 64px; height: 54px; margin-left: 45px; fill: none; stroke: #2c2d2f; stroke-width: 5; stroke-linecap: round; }
.dock { display: flex; justify-content: space-between; align-items: flex-start; padding: 74px 100px 0 87px; height: 201px; }
.globe { width: 80px; height: 80px; margin-top: 6px; fill: none; stroke: #53565c; stroke-width: 4.6; }
.mic { width: 56px; height: 86px; fill: none; stroke: #53565c; stroke-width: 4.8; stroke-linecap: round; }
.home { width: 417px; height: 15px; border-radius: 8px; background: #000; margin-left: 377px; }
```
